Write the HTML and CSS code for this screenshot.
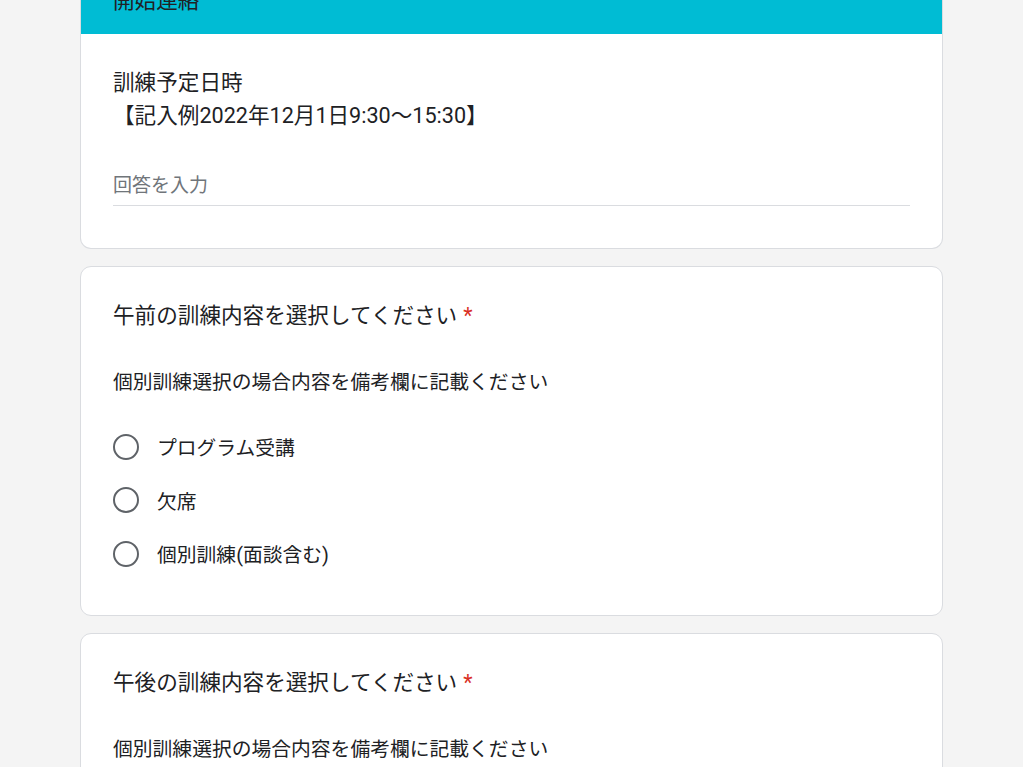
FILE: index.html
```html
<!DOCTYPE html>
<html lang="ja">
<head>
  <meta charset="UTF-8" />
  <meta name="viewport" content="width=device-width, initial-scale=1.0"/>
  <title>訓練連絡フォーム</title>
  <link rel="stylesheet" href="styles.css">
</head>
<body>
  <main class="form">

    <!-- Section: 開始連絡 -->
    <section class="card section-card">
      <div class="section-head">開始連絡</div>
      <div class="card-body first">
        <div class="q-title">訓練予定日時<br>【記入例2022年12月1日9:30～15:30】</div>
        <div class="text-input">回答を入力</div>
      </div>
    </section>

    <!-- 午前 -->
    <section class="card">
      <div class="card-body">
        <div class="q-title">午前の訓練内容を選択してください<span class="req">*</span></div>
        <div class="q-desc">個別訓練選択の場合内容を備考欄に記載ください</div>
        <div class="options">
          <label class="option"><span class="radio"></span>プログラム受講</label>
          <label class="option"><span class="radio"></span>欠席</label>
          <label class="option"><span class="radio"></span>個別訓練(面談含む)</label>
        </div>
      </div>
    </section>

    <!-- 午後 -->
    <section class="card">
      <div class="card-body">
        <div class="q-title">午後の訓練内容を選択してください<span class="req">*</span></div>
        <div class="q-desc">個別訓練選択の場合内容を備考欄に記載ください</div>
        <div class="options">
          <label class="option"><span class="radio"></span>プログラム受講</label>
          <label class="option"><span class="radio"></span>欠席</label>
          <label class="option"><span class="radio"></span>個別訓練(面談含む)</label>
        </div>
      </div>
    </section>

  </main>
</body>
</html>
```

FILE: styles.css
```css
* {
  margin: 0;
  padding: 0;
  box-sizing: border-box;
}

body {
  background-color: #f4f4f4;
  font-family: Roboto, "Noto Sans CJK JP", sans-serif;
  color: #202124;
  overflow: hidden;
}

/* page is scrolled a little, so the section header is cut off at the top */
.form {
  width: 863px;
  margin: -31px auto 0;
  display: flex;
  flex-direction: column;
  gap: 17px;
}

.card {
  background: #fff;
  border: 1px solid #dadce0;
  border-radius: 11px;
  overflow: hidden;
}

.section-card {
  border-top: none;
}

.section-head {
  background: #00bcd4;
  margin: 0 -1px;
  padding: 16px 33px 17px;
  font-size: 21.6px;
  line-height: 32px;
  color: #202124;
}

.card-body {
  padding: 32px 32px 34px;
}

.card-body.first {
  padding-top: 32px;
  padding-bottom: 42px;
}

.q-title {
  font-size: 21.6px;
  line-height: 33px;
}

.req {
  color: #d93025;
  margin-left: 6px;
}

.q-desc {
  margin-top: 36px;
  font-size: 19.8px;
  line-height: 30px;
}

.text-input {
  margin-top: 39px;
  padding-bottom: 4px;
  font-size: 19px;
  line-height: 30px;
  color: #70757a;
  border-bottom: 1px solid #dadce0;
}

.options {
  margin-top: 22px;
  display: flex;
  flex-direction: column;
}

.option {
  height: 53.5px;
  display: flex;
  align-items: center;
  gap: 18px;
  font-size: 19.8px;
}

.radio {
  width: 26px;
  height: 26px;
  border: 2px solid #5f6368;
  border-radius: 50%;
  flex-shrink: 0;
}
```
